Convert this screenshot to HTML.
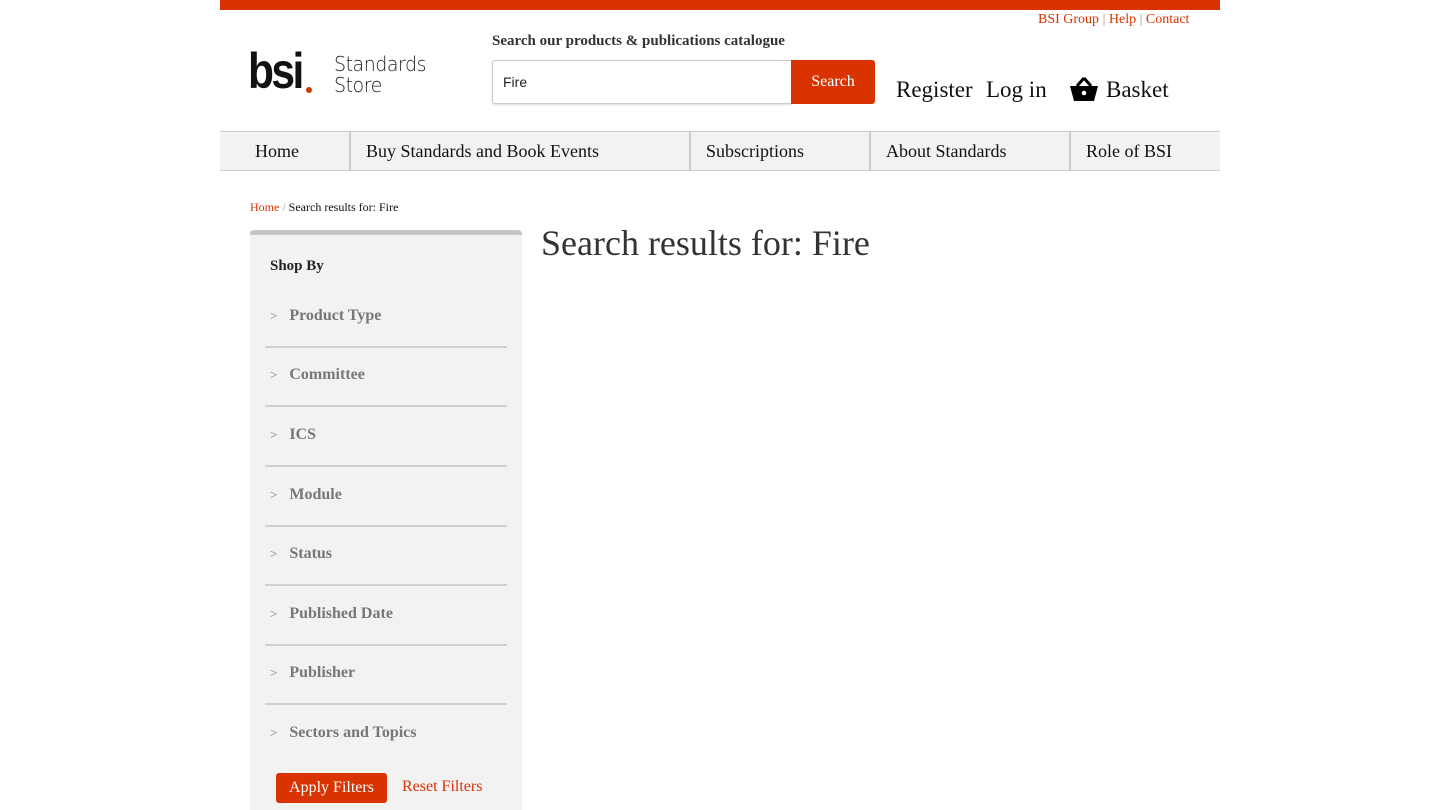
<!DOCTYPE html>
<html><head><meta charset="utf-8"><style>
*{margin:0;padding:0;box-sizing:border-box}
body{width:1440px;height:805px;overflow:hidden;background:#fff;font-family:"Liberation Serif",serif;position:relative}
.a{position:absolute}
.red{color:#d83300}
</style></head><body>
<div class="a" style="left:220px;top:0;width:1000px;height:10px;background:#d83300"></div>
<div class="a" style="left:1038px;top:12px;font-size:14px;color:#999"><span class="red">BSI Group</span> | <span class="red">Help</span> | <span class="red">Contact</span></div>
<div class="a" style="left:248px;top:46px;font-family:'Liberation Sans',sans-serif;font-weight:bold;font-size:50px;letter-spacing:-3px;color:#111;line-height:50px;transform:scaleX(0.85);transform-origin:left">bsi</div>
<div class="a" style="left:306px;top:87px;width:6px;height:6px;border-radius:3px;background:#d83300"></div>
<div class="a" style="left:334px;top:54px;font-family:'DejaVu Sans',sans-serif;font-weight:200;font-size:20px;line-height:21px;color:#222;letter-spacing:-0.5px;transform:scaleX(0.95);transform-origin:left">Standards<br>Store</div>
<div class="a" style="left:492px;top:33px;font-size:15px;font-weight:bold;color:#333">Search our products &amp; publications catalogue</div>
<div class="a" style="left:492px;top:60px;width:300px;height:44px;border:1px solid #ccc;border-right:none;border-radius:3px 0 0 3px;box-shadow:0 1px 2px rgba(0,0,0,.15);font-family:'Liberation Sans',sans-serif;font-size:14px;padding:13px 10px;color:#222">Fire</div>
<div class="a" style="left:791px;top:60px;width:84px;height:44px;background:#d83300;border-radius:0 3px 3px 0;color:#fff;font-size:16px;text-align:center;line-height:44px">Search</div>
<div class="a" style="left:896px;top:77px;font-size:23px;color:#111">Register</div>
<div class="a" style="left:986px;top:77px;font-size:23px;color:#111">Log in</div>
<svg class="a" style="left:1069px;top:77px" width="30" height="25" viewBox="0 0 30 25"><path d="M15 1 L8 9 M15 1 L22 9" stroke="#000" stroke-width="3" fill="none"/><path d="M1 9 H29 L25 24 H5 Z" fill="#000"/><circle cx="15" cy="16" r="2.3" fill="#fff"/></svg>
<div class="a" style="left:1106px;top:77px;font-size:23px;color:#111">Basket</div>
<div class="a" style="left:220px;top:131px;width:1000px;height:40px;background:#f2f2f2;border-top:1px solid #ccc;border-bottom:1px solid #ccc"></div>
<div class="a" style="left:349px;top:131px;width:2px;height:40px;background:#ccc"></div>
<div class="a" style="left:689px;top:131px;width:2px;height:40px;background:#ccc"></div>
<div class="a" style="left:869px;top:131px;width:2px;height:40px;background:#ccc"></div>
<div class="a" style="left:1069px;top:131px;width:2px;height:40px;background:#ccc"></div>
<div class="a" style="top:141px;left:255px;font-size:18px;color:#111">Home</div>
<div class="a" style="top:141px;left:366px;font-size:18px;color:#111">Buy Standards and Book Events</div>
<div class="a" style="top:141px;left:706px;font-size:18px;color:#111">Subscriptions</div>
<div class="a" style="top:141px;left:886px;font-size:18px;color:#111">About Standards</div>
<div class="a" style="top:141px;left:1086px;font-size:18px;color:#111">Role of BSI</div>
<div class="a" style="left:250px;top:200px;font-size:12px;color:#111"><span class="red">Home</span> <span style="color:#999">/</span> Search results for: Fire</div>
<div class="a" style="left:541px;top:222px;font-size:36px;color:#333">Search results for: Fire</div>
<div class="a" style="left:250px;top:230px;width:272px;height:580px;background:#f2f2f2;border-top:5px solid #c4c4c4;border-radius:4px 4px 0 0"></div>
<div class="a" style="left:270px;top:258px;font-size:15px;font-weight:bold;color:#222">Shop By</div>
<div id="items"></div>
<div class="a" style="left:276px;top:773px;width:111px;height:30px;background:#d83300;border-radius:3px;color:#fff;font-size:16px;text-align:center;line-height:30px">Apply Filters</div>
<div class="a" style="left:402px;top:778px;font-size:16px;color:#d83300">Reset Filters</div>
<script>
var n=["Product Type","Committee","ICS","Module","Status","Published Date","Publisher","Sectors and Topics"],c=[316,375,435,495,554,614,673,733],h="";
for(var i=0;i<8;i++){h+='<div class="a" style="left:270px;top:'+(c[i]-9)+'px;font-size:16px;color:#777;font-weight:bold;white-space:nowrap"><span style="font-weight:normal;font-size:13px">&gt;</span>&nbsp;&nbsp;&nbsp;'+n[i]+'</div>';if(i<7)h+='<div class="a" style="left:265px;top:'+(c[i]+30)+'px;width:242px;height:2px;background:#d0d0d0"></div>';}
document.getElementById("items").innerHTML=h;
</script>
</body></html>
